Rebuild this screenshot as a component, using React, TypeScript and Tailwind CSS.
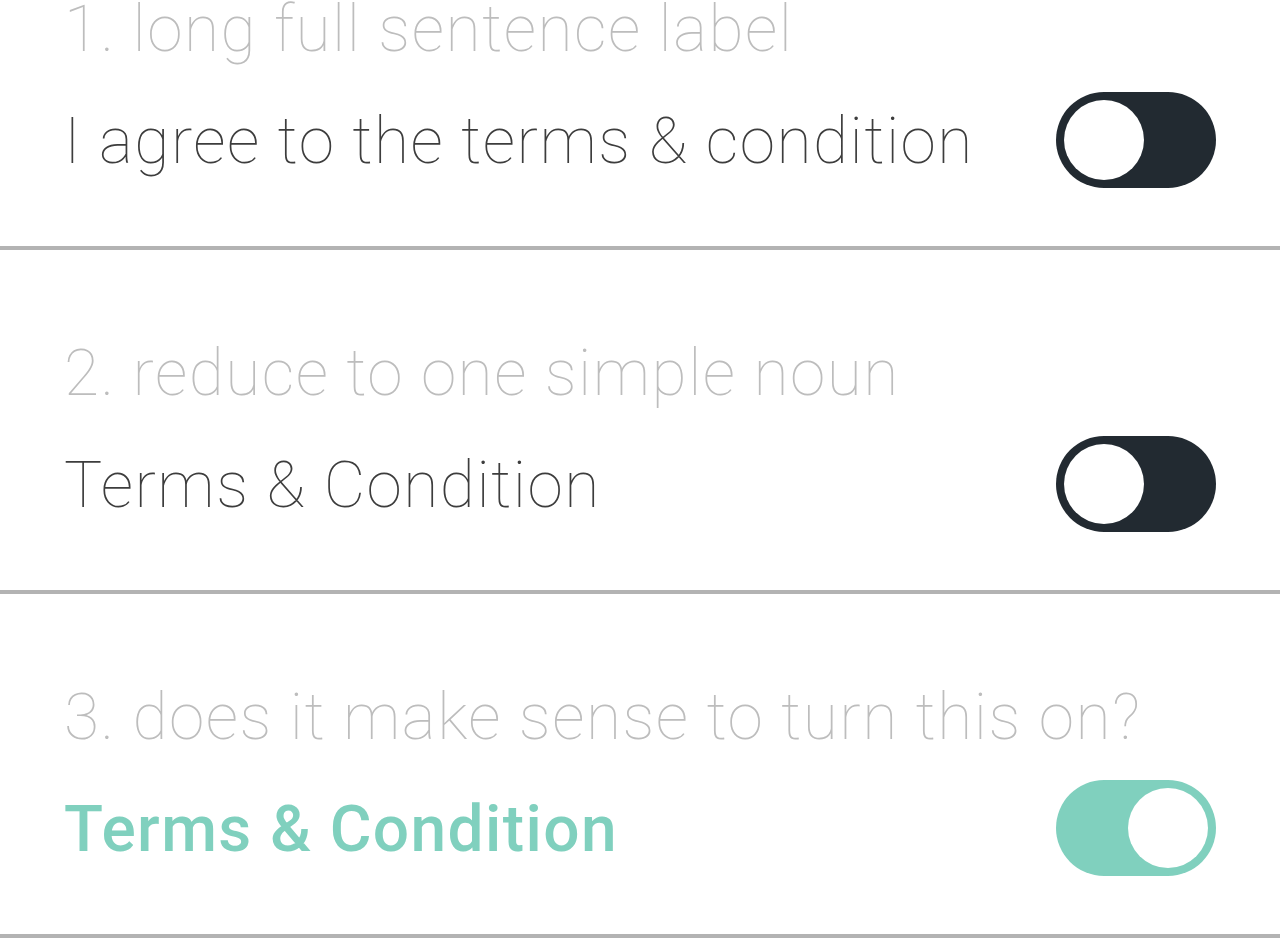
const font = { fontFamily: 'Roboto, "Liberation Sans", sans-serif' };

type Row = { step: string; label: string; on: boolean };

const rows: Row[] = [
  { step: '1. long full sentence label', label: 'I agree to the terms & condition', on: false },
  { step: '2. reduce to one simple noun', label: 'Terms & Condition', on: false },
  { step: '3. does it make sense to turn this on?', label: 'Terms & Condition', on: true },
];

function Toggle({ on }: { on: boolean }) {
  return (
    <div
      className={`flex h-[96px] w-[160px] shrink-0 items-center rounded-full p-[8px] ${
        on ? 'justify-end bg-[#80d0be]' : 'justify-start bg-[#222a31]'
      }`}
    >
      <div className="h-[80px] w-[80px] rounded-full bg-white" />
    </div>
  );
}

export default function App() {
  return (
    <div className="h-[940px] w-full overflow-hidden bg-white" style={font}>
      {/* page is scrolled: first row's top is above the fold */}
      <div className="-mt-[94px]">
        {rows.map((row) => (
          <div key={row.step} className="h-[344px] border-b-4 border-[#b3b3b3] px-16 pt-[92px]">
            <p className="text-[64px] font-thin leading-[64px] tracking-[1.5px] whitespace-nowrap text-[#bdbdbd]">
              {row.step}
            </p>
            <div className="mt-[30px] flex items-center justify-between">
              <p
                className={`pt-1 text-[64px] leading-[64px] whitespace-nowrap ${
                  row.on
                    ? 'font-medium tracking-[1.4px] text-[#80d0be]'
                    : 'font-thin tracking-[1.5px] text-[#3d3d3d]'
                }`}
              >
                {row.label}
              </p>
              <Toggle on={row.on} />
            </div>
          </div>
        ))}
      </div>
    </div>
  );
}
